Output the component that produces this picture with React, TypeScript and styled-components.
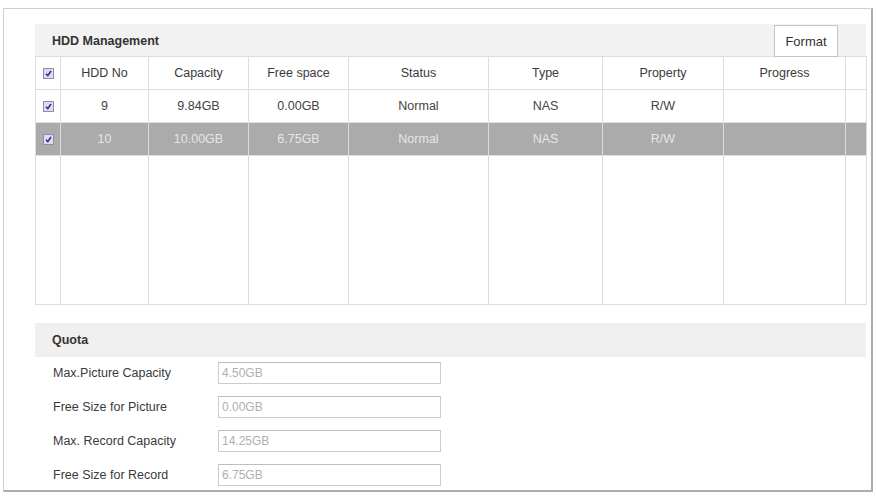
import React from 'react';
import styled, { createGlobalStyle } from 'styled-components';

type Disk = {
  no: string;
  capacity: string;
  free: string;
  status: string;
  type: string;
  property: string;
  progress: string;
  selected?: boolean;
};

const disks: Disk[] = [
  { no: '9', capacity: '9.84GB', free: '0.00GB', status: 'Normal', type: 'NAS', property: 'R/W', progress: '' },
  { no: '10', capacity: '10.00GB', free: '6.75GB', status: 'Normal', type: 'NAS', property: 'R/W', progress: '', selected: true },
];

const columns = ['HDD No', 'Capacity', 'Free space', 'Status', 'Type', 'Property', 'Progress'];
const widths = [25, 88, 100, 100, 140, 114, 121, 122, 21];

const quota = [
  { label: 'Max.Picture Capacity', value: '4.50GB' },
  { label: 'Free Size for Picture', value: '0.00GB' },
  { label: 'Max. Record Capacity', value: '14.25GB' },
  { label: 'Free Size for Record', value: '6.75GB' },
];

const Check: React.FC = () => (
  <svg width="11" height="11" viewBox="0 0 11 11">
    <rect x="0.5" y="0.5" width="10" height="10" fill="#dcdcee" stroke="#8e8eb2" />
    <path d="M3 5.8 L4.8 7.6 L8 3" fill="none" stroke="#2b2b8c" strokeWidth="1.6" />
  </svg>
);

const App: React.FC = () => {
  return (
    <>
      <GlobalStyle />
      <Frame>
        <SectionBar>
          <SectionTitle>HDD Management</SectionTitle>
          <FormatButton>Format</FormatButton>
        </SectionBar>
        <DiskTable>
          <colgroup>
            {widths.map((w, i) => (
              <col key={i} style={{ width: w }} />
            ))}
          </colgroup>
          <thead>
            <tr>
              <HeadCell>
                <Check />
              </HeadCell>
              {columns.map((c) => (
                <HeadCell key={c}>{c}</HeadCell>
              ))}
              <HeadCell />
            </tr>
          </thead>
          <tbody>
            {disks.map((d) => (
              <Row key={d.no} $selected={d.selected}>
                <Cell>
                  <Check />
                </Cell>
                <Cell>{d.no}</Cell>
                <Cell>{d.capacity}</Cell>
                <Cell>{d.free}</Cell>
                <Cell>{d.status}</Cell>
                <Cell>{d.type}</Cell>
                <Cell>{d.property}</Cell>
                <Cell>{d.progress}</Cell>
                <Cell />
              </Row>
            ))}
            <FillerRow>
              {widths.map((_, i) => (
                <Cell key={i} />
              ))}
            </FillerRow>
          </tbody>
        </DiskTable>

        <QuotaBar>
          <SectionTitle>Quota</SectionTitle>
        </QuotaBar>
        <QuotaList>
          {quota.map((q) => (
            <QuotaRow key={q.label}>
              <QuotaLabel>{q.label}</QuotaLabel>
              <QuotaInput value={q.value} readOnly disabled />
            </QuotaRow>
          ))}
        </QuotaList>
      </Frame>
    </>
  );
};

export default App;

const GlobalStyle = createGlobalStyle`
  body {
    margin: 0;
    background: #ffffff;
    font-family: "Liberation Sans", Arial, sans-serif;
  }
`;

const Frame = styled.div`
  box-sizing: border-box;
  width: 870px;
  height: 484px;
  margin: 8px 0 0 3px;
  padding: 15px 5px 0 31px;
  border: 1px solid #cfcfcf;
  border-right: 2px solid #acacac;
  border-bottom: 2px solid #acacac;
`;

const SectionBar = styled.div`
  display: flex;
  align-items: flex-start;
  justify-content: space-between;
  height: 32px;
  width: 831px;
  background: #f2f2f2;
`;

const SectionTitle = styled.div`
  padding: 10px 0 0 17px;
  font-size: 12.5px;
  font-weight: bold;
  color: #333333;
`;

const FormatButton = styled.button`
  box-sizing: border-box;
  width: 64px;
  height: 32px;
  margin: 1px 28px 0 0;
  border: 1px solid #c4c4c4;
  background: #ffffff;
  font-family: "Liberation Sans", Arial, sans-serif;
  font-size: 13px;
  color: #333333;
  padding: 0;
  position: relative;
  z-index: 1;
`;

const DiskTable = styled.table`
  width: 831px;
  table-layout: fixed;
  border-collapse: collapse;
  font-size: 12.5px;
  color: #444444;
`;

const HeadCell = styled.th`
  height: 32px;
  padding: 0;
  border: 1px solid #dedede;
  font-weight: normal;
  color: #3a3a3a;
  text-align: center;
  vertical-align: middle;
  line-height: 0;

  &:first-child svg {
    vertical-align: middle;
  }
`;

const Row = styled.tr<{ $selected?: boolean }>`
  background: ${({ $selected }) => ($selected ? '#ababab' : '#ffffff')};
  color: ${({ $selected }) => ($selected ? '#e6e6e6' : '#444444')};
`;

const Cell = styled.td`
  height: 32px;
  padding: 0;
  border: 1px solid #dedede;
  text-align: center;
  vertical-align: middle;

  svg {
    display: block;
    margin: 0 auto;
  }
`;

const FillerRow = styled.tr`
  td {
    height: 148px;
  }
`;

const QuotaBar = styled.div`
  height: 34px;
  width: 831px;
  margin-top: 18px;
  background: #f0f0f0;
`;

const QuotaList = styled.div`
  display: flex;
  flex-direction: column;
  gap: 12px;
  padding-top: 5px;
`;

const QuotaRow = styled.div`
  display: flex;
  align-items: center;
  height: 22px;
`;

const QuotaLabel = styled.div`
  width: 165px;
  padding-left: 18px;
  font-size: 12.5px;
  color: #3a3a3a;
`;

const QuotaInput = styled.input`
  box-sizing: border-box;
  width: 223px;
  height: 22px;
  padding: 0 3px;
  border: 1px solid #cccccc;
  border-top-color: #bdbdbd;
  background: #ffffff;
  font-family: "Liberation Sans", Arial, sans-serif;
  font-size: 12px;
  color: #b0b0b0;
  -webkit-text-fill-color: #b0b0b0;
  opacity: 1;
`;
